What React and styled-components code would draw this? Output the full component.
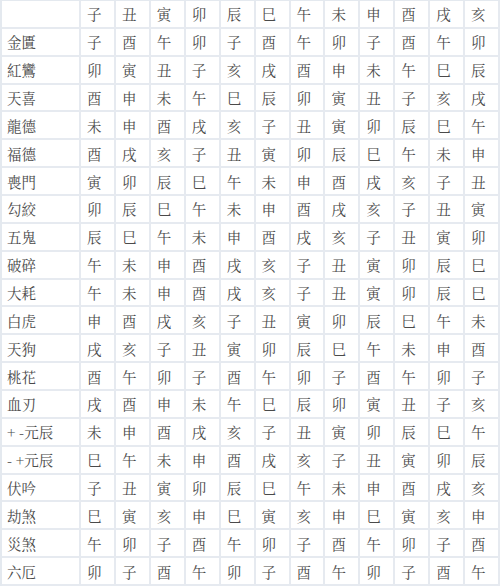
import React from 'react'
import styled, { createGlobalStyle } from 'styled-components'

const GlobalStyle = createGlobalStyle`
  html, body {
    margin: 0;
    padding: 0;
    background: #ffffff;
  }
`

const Table = styled.div`
  width: 500px;
  height: 586px;
  box-sizing: border-box;
  display: grid;
  grid-template-columns: 79px repeat(12, 1fr);
  grid-template-rows: repeat(21, 1fr);
  border-top: 1px solid #e4e9ef;
  border-left: 2px solid #e4e9ef;
  font-family: "Noto Serif CJK TC", "Noto Serif CJK SC", "Noto Sans CJK TC", serif;
  font-size: 14.5px;
  color: #4a4a4a;
  background: #fff;
`

const Cell = styled.div`
  display: flex;
  align-items: center;
  padding-left: ${p => (p.$label ? '5px' : '6px')};
  border-right: 2px solid #e6eaf0;
  border-bottom: 2px solid #e6eaf0;
  white-space: nowrap;
  overflow: hidden;
`

const header = ['子', '丑', '寅', '卯', '辰', '巳', '午', '未', '申', '酉', '戌', '亥']

const rows = [
  ['金匱', '子酉午卯子酉午卯子酉午卯'],
  ['紅鸞', '卯寅丑子亥戌酉申未午巳辰'],
  ['天喜', '酉申未午巳辰卯寅丑子亥戌'],
  ['龍德', '未申酉戌亥子丑寅卯辰巳午'],
  ['福德', '酉戌亥子丑寅卯辰巳午未申'],
  ['喪門', '寅卯辰巳午未申酉戌亥子丑'],
  ['勾絞', '卯辰巳午未申酉戌亥子丑寅'],
  ['五鬼', '辰巳午未申酉戌亥子丑寅卯'],
  ['破碎', '午未申酉戌亥子丑寅卯辰巳'],
  ['大耗', '午未申酉戌亥子丑寅卯辰巳'],
  ['白虎', '申酉戌亥子丑寅卯辰巳午未'],
  ['天狗', '戌亥子丑寅卯辰巳午未申酉'],
  ['桃花', '酉午卯子酉午卯子酉午卯子'],
  ['血刃', '戌酉申未午巳辰卯寅丑子亥'],
  ['+ -元辰', '未申酉戌亥子丑寅卯辰巳午'],
  ['- +元辰', '巳午未申酉戌亥子丑寅卯辰'],
  ['伏吟', '子丑寅卯辰巳午未申酉戌亥'],
  ['劫煞', '巳寅亥申巳寅亥申巳寅亥申'],
  ['災煞', '午卯子酉午卯子酉午卯子酉'],
  ['六厄', '卯子酉午卯子酉午卯子酉午'],
]

export default function App() {
  return (
    <>
      <GlobalStyle />
      <Table>
        <Cell $label />
        {header.map((h, i) => (
          <Cell key={'h' + i}>{h}</Cell>
        ))}
        {rows.map(([name, vals]) => (
          <React.Fragment key={name}>
            <Cell $label>{name}</Cell>
            {Array.from(vals).map((v, i) => (
              <Cell key={i}>{v}</Cell>
            ))}
          </React.Fragment>
        ))}
      </Table>
    </>
  )
}
